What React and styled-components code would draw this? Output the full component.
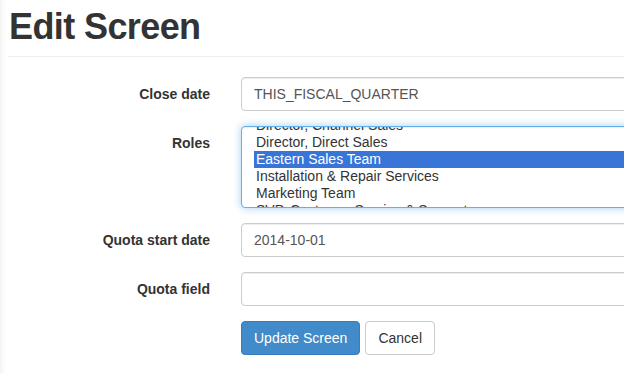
import React, { useEffect, useRef } from "react";
import styled, { createGlobalStyle } from "styled-components";

const GlobalStyle = createGlobalStyle`
  html, body {
    margin: 0;
    padding: 0;
  }
  body {
    background: linear-gradient(to right, #f3f3f3 0, #fbfbfb 3px, #fff 7px);
    font-family: "Liberation Sans", Arial, Helvetica, sans-serif;
    font-size: 14px;
    line-height: 20px;
    color: #333;
    overflow: hidden;
  }
`;

const Page = styled.div`
  padding: 7px 0 0 8px;
  width: 616px;
  overflow: hidden;
`;

const Title = styled.h1`
  margin: 0;
  font-size: 36px;
  font-weight: bold;
  letter-spacing: -0.6px;
  line-height: 1.1;
  color: #333;
  padding-left: 1px;
`;

const Rule = styled.hr`
  margin: 9px 0 20px;
  border: 0;
  border-top: 1px solid #eee;
`;

const Form = styled.form`
  display: flex;
  flex-direction: column;
  gap: 15px;
`;

const Group = styled.div`
  display: flex;
  align-items: flex-start;
  gap: 31px;
`;

const Label = styled.label`
  flex: 0 0 202px;
  text-align: right;
  font-weight: bold;
  padding-top: 7px;
  line-height: 20px;
`;

const Input = styled.input`
  flex: 0 0 auto;
  width: 500px;
  height: 34px;
  box-sizing: border-box;
  padding: 6px 12px;
  font-family: inherit;
  font-size: 14px;
  line-height: 20px;
  color: #555;
  background: #fff;
  border: 1px solid #ccc;
  border-radius: 4px;
  box-shadow: inset 0 1px 1px rgba(0, 0, 0, 0.075);
  outline: none;
`;

const ListBox = styled.div`
  flex: 0 0 auto;
  width: 500px;
  height: 82px;
  box-sizing: border-box;
  padding: 0 12px;
  overflow: hidden;
  background: #fff;
  border: 1px solid #66afe9;
  border-radius: 4px;
  box-shadow: inset 0 1px 1px rgba(0, 0, 0, 0.075), 0 0 8px rgba(102, 175, 233, 0.6);
`;

const Option = styled.div`
  height: 17px;
  line-height: 17px;
  padding: 0 2px;
  white-space: nowrap;
  color: ${(p) => (p.selected ? "#fff" : "#333")};
  background: ${(p) => (p.selected ? "#3875d7" : "transparent")};
`;

const Actions = styled.div`
  display: flex;
  gap: 5px;
  padding-left: 233px;
`;

const Button = styled.button`
  height: 34px;
  box-sizing: border-box;
  padding: 6px 12px;
  font-family: inherit;
  font-size: 14px;
  line-height: 20px;
  border-radius: 4px;
  border: 1px solid ${(p) => (p.primary ? "#357ebd" : "#ccc")};
  background: ${(p) => (p.primary ? "#428bca" : "#fff")};
  color: ${(p) => (p.primary ? "#fff" : "#333")};
  cursor: pointer;
`;

const roles = [
  "CEO",
  "CFO",
  "COO",
  "Director, Channel Sales",
  "Director, Direct Sales",
  "Eastern Sales Team",
  "Installation & Repair Services",
  "Marketing Team",
  "SVP, Customer Service & Support",
  "SVP, Human Resources",
  "SVP, Sales & Marketing",
];

function RolesList() {
  const ref = useRef(null);
  useEffect(() => {
    if (ref.current) ref.current.scrollTop = 3 * 17 + 10;
  }, []);
  return (
    <ListBox ref={ref} role="listbox">
      {roles.map((r) => (
        <Option key={r} selected={r === "Eastern Sales Team"}>
          {r}
        </Option>
      ))}
    </ListBox>
  );
}

export default function App() {
  return (
    <>
      <GlobalStyle />
      <Page>
        <Title>Edit Screen</Title>
        <Rule />
        <Form onSubmit={(e) => e.preventDefault()}>
          <Group>
            <Label>Close date</Label>
            <Input defaultValue="THIS_FISCAL_QUARTER" />
          </Group>
          <Group>
            <Label>Roles</Label>
            <RolesList />
          </Group>
          <Group>
            <Label>Quota start date</Label>
            <Input defaultValue="2014-10-01" />
          </Group>
          <Group>
            <Label>Quota field</Label>
            <Input defaultValue="" />
          </Group>
          <Actions>
            <Button primary type="submit">Update Screen</Button>
            <Button type="button">Cancel</Button>
          </Actions>
        </Form>
      </Page>
    </>
  );
}
